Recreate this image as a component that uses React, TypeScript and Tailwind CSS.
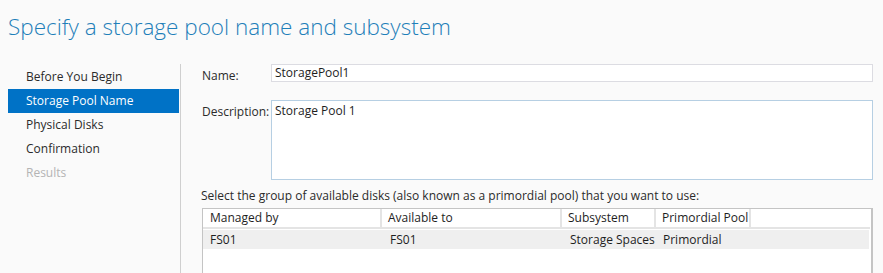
import React from "react";

const navItems = [
  { label: "Before You Begin", state: "normal" },
  { label: "Storage Pool Name", state: "active" },
  { label: "Physical Disks", state: "normal" },
  { label: "Confirmation", state: "normal" },
  { label: "Results", state: "disabled" },
];

export default function App() {
  return (
    <div
      className="w-[883px] h-[273px] overflow-hidden bg-[#fafafa] text-[12px] text-[#1e1e1e]"
      style={{ fontFamily: '"Segoe UI", "Open Sans", "Noto Sans", sans-serif' }}
    >
      <div className="h-[64px] pl-[8px] pt-[12px]">
        <h1 className="text-[22.5px] font-light leading-[30px] text-[#1f7fb9]">
          Specify a storage pool name and subsystem
        </h1>
      </div>
      <div className="flex h-[209px]">
        <nav className="w-[181px] pt-px pl-[8px] border-r border-[#cfcfcf] flex flex-col">
          {navItems.map((it) => (
            <div
              key={it.label}
              className={
                it.state === "active"
                  ? "h-[24px] w-[171px] pl-[18px] flex items-center bg-[#0072c6] text-white"
                  : it.state === "disabled"
                  ? "h-[24px] pl-[18px] flex items-center text-[#b4b4b4]"
                  : "h-[24px] pl-[18px] flex items-center text-[#2b2b2b]"
              }
            >
              {it.label}
            </div>
          ))}
        </nav>
        <main className="flex-1 pl-[21px] pr-[10px] flex flex-col">
          <div className="flex items-start h-[18px]">
            <div className="w-[69px] pt-[3px] text-[#2b2b2b]">Name:</div>
            <div className="w-[602px] h-[18px] bg-white border border-[#dcdce2] pl-[3px] flex items-center leading-none">
              StoragePool1
            </div>
          </div>
          <div className="flex items-start mt-[18px]">
            <div className="w-[69px] pt-[3px] text-[#2b2b2b]">Description:</div>
            <div className="w-[602px] h-[80px] bg-white border border-[#b6cfe3] pl-[3px] pt-[1px]">
              Storage Pool 1
            </div>
          </div>
          <div className="mt-[4px] h-[24px] flex items-center -ml-px text-[#2b2b2b]">
            Select the group of available disks (also known as a primordial pool) that you want to use:
          </div>
          <div className="w-[671px] flex-1 bg-white border border-[#c4c4c4] border-r-2 border-b-0 pr-px">
            <div className="flex h-[20px] border-b-2 border-[#e4e4e4] text-[#1e1e1e]">
              <div className="w-[179px] pl-[7px] flex items-center border-r-2 border-[#e4e4e4]">Managed by</div>
              <div className="w-[180px] pl-[6px] flex items-center border-r-2 border-[#e4e4e4]">Available to</div>
              <div className="w-[94px] pl-[6px] flex items-center border-r-2 border-[#e4e4e4]">Subsystem</div>
              <div className="w-[95px] pl-[6px] flex items-center border-r-2 border-[#e4e4e4] whitespace-nowrap">Primordial Pool</div>
              <div className="flex-1" />
            </div>
            <div className="flex h-[19px] mt-px bg-[#efefef] text-[#1e1e1e] mr-px">
              <div className="w-[179px] pl-[7px] flex items-center">FS01</div>
              <div className="w-[180px] pl-[8px] flex items-center">FS01</div>
              <div className="w-[94px] pl-[8px] flex items-center whitespace-nowrap">Storage Spaces</div>
              <div className="w-[95px] pl-[7px] flex items-center">Primordial</div>
              <div className="flex-1" />
            </div>
          </div>
        </main>
      </div>
    </div>
  );
}
